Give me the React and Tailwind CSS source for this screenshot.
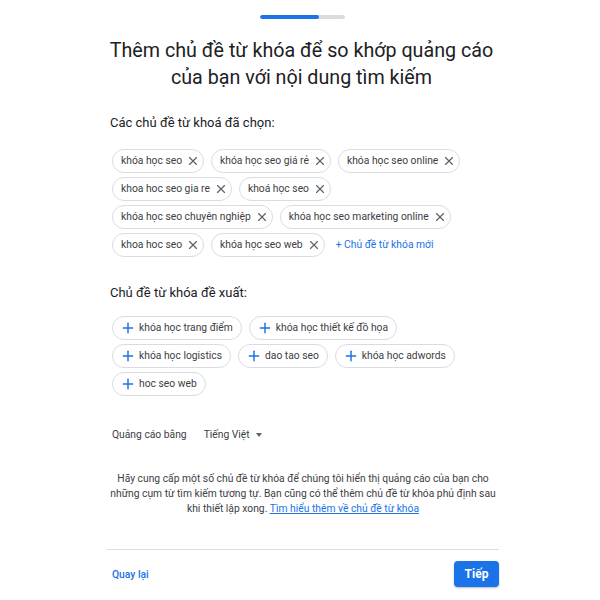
import { X, Plus } from 'lucide-react';

const selectedRows = [
  ['khóa học seo', 'khóa học seo giá rẻ', 'khóa học seo online'],
  ['khoa hoc seo gia re', 'khoá học seo'],
  ['khóa học seo chuyên nghiệp', 'khóa học seo marketing online'],
  ['khoa hoc seo', 'khóa học seo web'],
];

const suggested = [
  'khóa học trang điểm',
  'khóa học thiết kế đồ họa',
  'khóa học logistics',
  'dao tao seo',
  'khóa học adwords',
  'hoc seo web',
];

function SelectedChip({ label }) {
  return (
    <div className="flex items-center h-6 pl-2 pr-[3px] gap-1 rounded-full border border-[#dadce0] text-[10.3px] text-[#3c4043]">
      <span>{label}</span>
      <X size={14} strokeWidth={2} className="text-[#5f6368]" />
    </div>
  );
}

function SuggestedChip({ label }) {
  return (
    <div className="flex items-center h-6 pl-[7px] pr-2 gap-[3px] rounded-full border border-[#dadce0] text-[10.3px] text-[#3c4043]">
      <Plus size={16} strokeWidth={2.2} className="text-[#1a73e8]" />
      <span>{label}</span>
    </div>
  );
}

export default function App() {
  return (
    <div className="w-[600px] h-[600px] bg-white font-['Roboto',sans-serif] text-[#202124]">
      <div className="flex justify-center pt-[15px] pl-[5px]">
        <div className="flex w-[85px] h-1 rounded-full bg-[#dadce0] overflow-hidden">
          <div className="w-[59px] h-full rounded-full bg-[#1a73e8]" />
        </div>
      </div>

      <h1 className="mt-[18px] pl-[3px] text-center text-[19.7px] leading-[27px] text-[#202124]">
        Thêm chủ đề từ khóa để so khớp quảng cáo
        <br />
        của bạn với nội dung tìm kiếm
      </h1>

      <div className="ml-[107px] w-[392px]">
        <div className="mt-[22px] pl-[3px] text-[13px] text-[#202124]">Các chủ đề từ khoá đã chọn:</div>

        <div className="mt-[16px] pl-[5px] flex flex-col gap-1">
          {selectedRows.map((row, i) => (
            <div key={i} className="flex items-center gap-[7px]">
              {row.map((label) => (
                <SelectedChip key={label} label={label} />
              ))}
              {i === selectedRows.length - 1 && (
                <span className="ml-1 text-[10.3px] text-[#1a73e8]">+ Chủ đề từ khóa mới</span>
              )}
            </div>
          ))}
        </div>

        <div className="mt-[26px] pl-[3px] text-[13px] text-[#202124]">Chủ đề từ khóa đề xuất:</div>

        <div className="mt-[14px] pl-[5px] flex flex-wrap w-[370px] gap-x-[7px] gap-y-1">
          {suggested.map((label) => (
            <SuggestedChip key={label} label={label} />
          ))}
        </div>

        <div className="mt-[31px] pl-[5px] flex items-center text-[10.3px] text-[#3c4043]">
          <span>Quảng cáo bằng</span>
          <span className="ml-[17px] flex items-center gap-1.5">
            Tiếng Việt
            <span className="w-0 h-0 border-l-[3.5px] border-r-[3.5px] border-t-[4px] border-l-transparent border-r-transparent border-t-[#5f6368]" />
          </span>
        </div>

        <p className="mt-[29px] w-full text-center text-[10.3px] leading-[15px] text-[#3c4043]">
          Hãy cung cấp một số chủ đề từ khóa để chúng tôi hiển thị quảng cáo của bạn cho
          <br />
          những cụm từ tìm kiếm tương tự. Bạn cũng có thể thêm chủ đề từ khóa phủ định sau
          <br />
          khi thiết lập xong.{' '}
          <span className="text-[#1a73e8] underline">Tìm hiểu thêm về chủ đề từ khóa</span>
        </p>

        <div className="mt-[33px] border-t border-[#dadce0]" />

        <div className="mt-[11px] flex items-center justify-between pl-[5px]">
          <span className="text-[10.3px] text-[#1a73e8] font-medium">Quay lại</span>
          <button className="h-[26px] w-[45px] rounded bg-[#1a73e8] text-white text-[12px] font-bold shadow-[0_1px_2px_rgba(60,64,67,0.35)]">
            Tiếp
          </button>
        </div>
      </div>
    </div>
  );
}
